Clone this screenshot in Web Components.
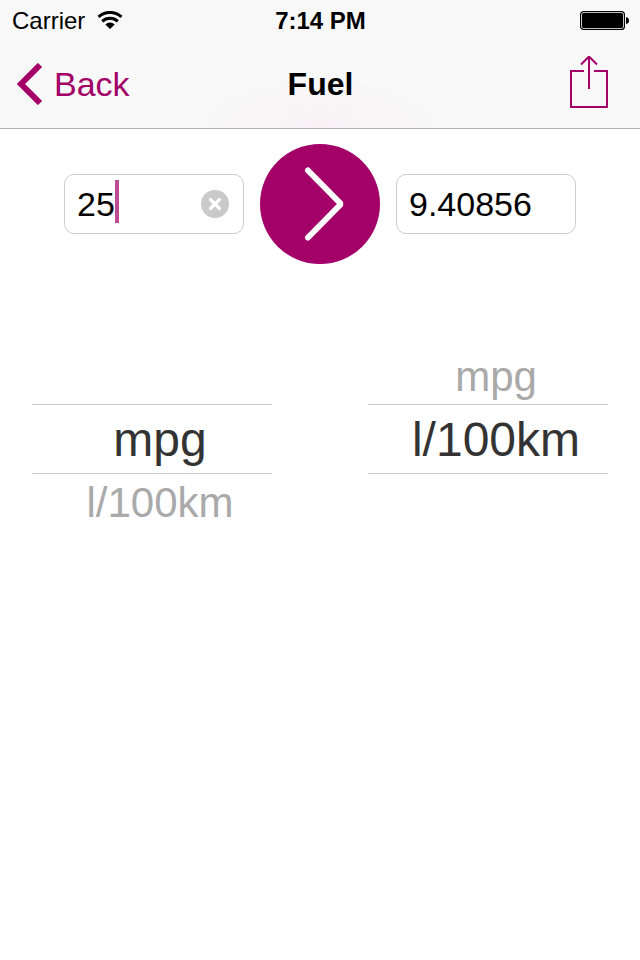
<!DOCTYPE html>
<html lang="en">
<head>
<meta charset="utf-8">
<meta name="viewport" content="width=device-width, initial-scale=1">
<title>Fuel</title>
<style>
body {
    margin: 0;
    background-color: #fff;
    color: #000;
    font-family: "Liberation Sans", Arial, sans-serif;

    --tint: #a30068;
    --bar-color: #f8f8f8;
    --line-color: #ccc;
}
</style>
</head>
<body>
<unit-app>
    <app-header slot="header" heading="Fuel">
        <status-bar slot="status" carrier="Carrier" time="7:14 PM"></status-bar>
    </app-header>
    <value-field slot="values" label="From value" value="25" editing></value-field>
    <convert-button slot="values"></convert-button>
    <value-field slot="values" label="To value" value="9.40856"></value-field>
    <unit-picker slot="units" label="From unit" options="mpg,l/100km" selected="0"></unit-picker>
    <unit-picker slot="units" label="To unit" options="mpg,l/100km" selected="1"></unit-picker>
</unit-app>

<script>
class UnitApp extends HTMLElement {
    constructor() {
        super();
        this.attachShadow({mode: 'open'});
        this.shadowRoot.innerHTML = `
<style>
:host {
    display: flex;
    flex-direction: column;
    min-height: 100vh;
}

.values {
    display: flex;
    align-items: center;
    justify-content: center;
    gap: 16px;
    padding: 15px 64px 0;
}

.units {
    display: flex;
    gap: 96px;
    padding: 84px 32px 0;
}
</style>
<slot name="header"></slot>
<main>
    <div class="values"><slot name="values"></slot></div>
    <div class="units"><slot name="units"></slot></div>
</main>
`;
    }
}

class StatusBar extends HTMLElement {
    constructor() {
        super();
        this.attachShadow({mode: 'open'});
        this.shadowRoot.innerHTML = `
<style>
:host {
    display: grid;
    grid-template-columns: 1fr auto 1fr;
    align-items: center;
    height: 42px;
    padding: 0 11px 0 12px;

    font-size: 24px;
    line-height: 42px;
}

.carrier {
    display: flex;
    align-items: center;
    gap: 12px;
}

.time {
    font-weight: bold;
}

.battery {
    justify-self: end;
}

svg {
    display: block;
}
</style>
<div class="carrier">
    <span class="name"></span>
    <svg width="26" height="20" viewBox="0 0 26 20" aria-hidden="true">
        <path d="M13 18 L8.3 13.4 A7 7 0 0 1 17.7 13.4 Z" />
        <path d="M5.2 10.4 A11.5 11.5 0 0 1 20.8 10.4 M1.5 5.900 A17 17 0 0 1 24.5 5.900" fill="none" stroke="#000" stroke-width="3" />
    </svg>
</div>
<span class="time"></span>
<svg class="battery" width="49" height="20" viewBox="0 0 49 20" role="img" aria-label="Battery full">
    <rect x=".6" y=".6" width="43.8" height="17.8" rx="3" fill="#fff" stroke="#000" stroke-width="1.2" />
    <rect x="2" y="2" width="41" height="15" rx="1.5" />
    <path d="M46 6 Q49 6.5 49 9.5 Q49 12.5 46 13 Z" />
</svg>
`;
    }

    connectedCallback() {
        this.shadowRoot.querySelector('.name').textContent = this.getAttribute('carrier');
        this.shadowRoot.querySelector('.time').textContent = this.getAttribute('time');
    }
}

class AppHeader extends HTMLElement {
    constructor() {
        super();
        this.attachShadow({mode: 'open'});
        this.shadowRoot.innerHTML = `
<style>
:host {
    display: block;
    border-bottom: 1px solid #b2b2b2;
    background: radial-gradient(ellipse 120px 50px at 50% 100%, #f8f2f5, var(--bar-color)) var(--bar-color);
}

nav {
    display: grid;
    grid-template-columns: 1fr auto 1fr;
    align-items: center;
    height: 86px;
    padding: 0 31px 2px 16px;
    box-sizing: border-box;
}

h1 {
    margin: 0;
    padding-left: 16px;

    font-size: 32px;
    font-weight: bold;
    line-height: 40px;
}

.back {
    justify-self: start;
    display: flex;
    align-items: center;
    gap: 10px;

    color: var(--tint);
    font-size: 34px;
    line-height: 40px;
    text-decoration: none;
}

.share {
    justify-self: end;
    padding: 0;
    border: none;
    background-color: transparent;
    color: var(--tint);
    cursor: pointer;
}

svg {
    display: block;
}
</style>
<slot name="status"></slot>
<nav>
    <a class="back" href="#">
        <svg width="28" height="42" viewBox="0 0 28 42" aria-hidden="true">
            <path d="M24 2 L5 21 L24 40" fill="none" stroke="currentColor" stroke-width="6" />
        </svg>
        <span>Back</span>
    </a>
    <h1></h1>
    <button class="share" type="button" aria-label="Share">
        <svg width="40" height="56" viewBox="0 0 40 56" fill="none" stroke="currentColor" stroke-width="2">
            <path d="M15 15 H2 V51 H38 V15 H25" />
            <path d="M20 33 V1 M12 8.500 L20 .500 L28 8.500" />
        </svg>
    </button>
</nav>
`;
    }

    connectedCallback() {
        this.shadowRoot.querySelector('h1').textContent = this.getAttribute('heading');
    }
}

class ValueField extends HTMLElement {
    constructor() {
        super();
        this.attachShadow({mode: 'open'});
        this.shadowRoot.innerHTML = `
<style>
:host {
    flex: 1;
    min-width: 0;

    display: flex;
    align-items: center;
    position: relative;
    height: 60px;
    padding: 0 14px 0 12px;
    box-sizing: border-box;

    border: 1px solid var(--line-color);
    border-radius: 10px;
    background-color: #fff;
    font-size: 34px;
}

input {
    flex: 1;
    min-width: 0;
    height: 40px;
    padding: 0;

    border: none;
    outline: none;
    background-color: transparent;
    color: inherit;
    font: inherit;
    line-height: 40px;
    caret-color: transparent;
}

.caret,
.clear {
    display: none;
}

/* sits right behind the typed digits */
:host([editing]) .caret {
    display: block;
    position: absolute;
    top: 5px;
    left: calc(12px + var(--length) * 1ch);
    width: 4px;
    height: 43px;
    background-color: var(--tint);
    opacity: .7;
    pointer-events: none;
}

:host([editing]) .clear {
    display: block;
    padding: 0;
    border: none;
    background-color: transparent;
    cursor: pointer;
}

svg {
    display: block;
}
</style>
<input type="text" inputmode="decimal">
<span class="caret"></span>
<button class="clear" type="button" aria-label="Clear">
    <svg width="28" height="28" viewBox="0 0 28 28">
        <circle cx="14" cy="14" r="14" fill="#c9c9c9" />
        <path d="M9.500 9.500 L18.500 18.500 M18.500 9.500 L9.500 18.500" stroke="#fff" stroke-width="3.2" stroke-linecap="round" />
    </svg>
</button>
`;
        this.input = this.shadowRoot.querySelector('input');
    }

    connectedCallback() {
        this.input.value = this.getAttribute('value');
        this.input.setAttribute('aria-label', this.getAttribute('label'));
        this.moveCaret();

        this.input.addEventListener('input', () => this.moveCaret());
        this.shadowRoot.querySelector('.clear').addEventListener('click', () => {
            this.input.value = '';
            this.moveCaret();
            this.input.focus();
        });
    }

    moveCaret() {
        this.style.setProperty('--length', this.input.value.length);
    }
}

class ConvertButton extends HTMLElement {
    constructor() {
        super();
        this.attachShadow({mode: 'open'});
        this.shadowRoot.innerHTML = `
<style>
:host {
    display: block;
}

button {
    display: block;
    width: 120px;
    height: 120px;
    padding: 0;

    border: none;
    border-radius: 50%;
    background-color: var(--tint);
    color: #fff;
    cursor: pointer;
}

svg {
    display: block;
}
</style>
<button type="button" aria-label="Convert">
    <svg width="120" height="120" viewBox="0 0 120 120">
        <path d="M48 26.500 L81 60 L48 93.500" fill="none" stroke="currentColor" stroke-width="6" stroke-linecap="round" stroke-linejoin="bevel" />
    </svg>
</button>
`;
    }
}

class UnitPicker extends HTMLElement {
    constructor() {
        super();
        this.attachShadow({mode: 'open'});
        this.shadowRoot.innerHTML = `
<style>
:host {
    flex: 1;
    min-width: 0;
    display: block;
}

.wheel {
    display: grid;
    grid-template-rows: 56px 70px 56px;
}

.band {
    grid-area: 2 / 1;
    border: solid var(--line-color);
    border-width: 1px 0;
}

label {
    grid-column: 1;
    display: flex;
    align-items: center;
    justify-content: center;
    padding: 2px 0 0 16px;

    color: #a9a9a9;
    font-size: 42px;
    line-height: 48px;
    white-space: nowrap;
    cursor: pointer;
}

label.current {
    color: #333;
    font-size: 48px;
}

input {
    appearance: none;
    width: 0;
    height: 0;
    margin: 0;
    outline: none;
}
</style>
<div class="wheel" role="radiogroup">
    <div class="band"></div>
</div>
`;
    }

    connectedCallback() {
        const wheel = this.shadowRoot.querySelector('.wheel');
        wheel.setAttribute('aria-label', this.getAttribute('label'));

        this.labels = this.getAttribute('options').split(',').map((name, index) => {
            const label = document.createElement('label');
            const input = document.createElement('input');
            input.type = 'radio';
            input.name = 'unit';
            input.value = name;
            input.addEventListener('change', () => this.select(index));
            label.append(input, name);
            wheel.appendChild(label);
            return label;
        });

        this.select(Number(this.getAttribute('selected')));
    }

    // turn the wheel so that the chosen unit lies in the band
    select(current) {
        this.labels.forEach((label, index) => {
            label.style.gridRow = index - current + 2;
            label.classList.toggle('current', index === current);
        });
        this.labels[current].querySelector('input').checked = true;
    }
}

customElements.define('unit-app', UnitApp);
customElements.define('status-bar', StatusBar);
customElements.define('app-header', AppHeader);
customElements.define('value-field', ValueField);
customElements.define('convert-button', ConvertButton);
customElements.define('unit-picker', UnitPicker);
</script>
</body>
</html>
